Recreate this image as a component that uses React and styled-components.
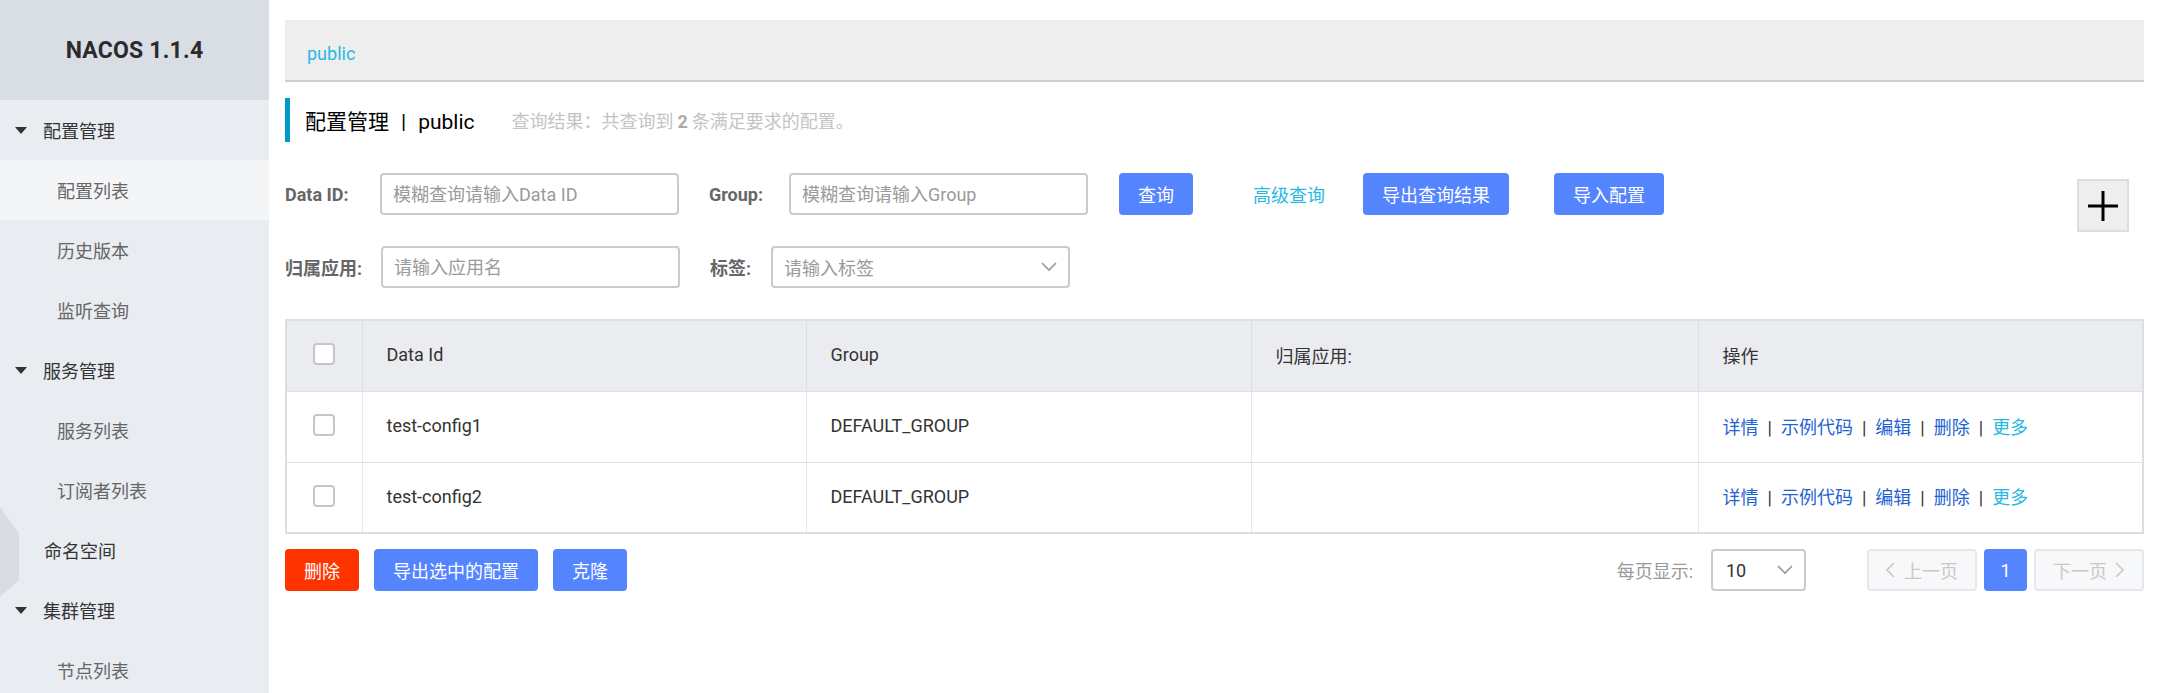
import React from 'react';
import styled, { createGlobalStyle, css } from 'styled-components';

const GlobalStyle = createGlobalStyle`
  html, body {
    margin:0;
    padding:0;
    background:#fff;
  }
  body {
    font-family: Roboto, "Noto Sans CJK SC", sans-serif;
    font-size:18px;
    color:#333;
  }
  * { box-sizing:border-box; }
`

const Page = styled.div`
  display:flex;
  height:693px;
  overflow:hidden;
`

/* ---------- sidebar ---------- */

const Sidebar = styled.aside`
  position:relative;
  width:269px;
  flex:none;
  background:#e9ecf1;
`

const Brand = styled.div`
  height:100px;
  display:flex;
  align-items:center;
  justify-content:center;
  background:#d9dde4;
  font-size:23px;
  font-weight:bold;
  color:#2b2b2b;
  letter-spacing:.2px;
`

const MenuItem = styled.div`
  height:60px;
  display:flex;
  align-items:center;
  color:#333;
  padding-left:${p => p.$level === 'sub' ? '57px' : p.$level === 'group' ? '15px' : '44px'};
  ${p => p.$level === 'sub' && css`color:#666;`}
  ${p => p.$active && css`background:#f4f5f7;`}
`

const Caret = styled.span`
  width:0;
  height:0;
  border-left:6.5px solid transparent;
  border-right:6.5px solid transparent;
  border-top:7px solid #333;
  margin-right:16px;
`

const CollapseTab = styled.div`
  position:absolute;
  left:0;
  top:507px;
  width:19px;
  height:90px;
  background:#d9dce2;
  clip-path:polygon(0 0, 100% 29%, 100% 81%, 0 100%);
`

/* ---------- main ---------- */

const Main = styled.main`
  flex:1;
  min-width:0;
  padding:20px 15px 0 16px;
`

const Crumb = styled.div`
  height:62px;
  background:#eeeeee;
  border-bottom:2px solid #cfcfcf;
  display:flex;
  align-items:center;
  padding:6px 0 0 22px;
  color:#27b8e3;
`

const TitleBar = styled.div`
  margin-top:16px;
  height:44px;
  display:flex;
  align-items:center;
  border-left:5px solid #0099cc;
  padding-left:15px;
`

const Title = styled.span`
  font-size:21px;
  color:#000;
`

const TitleSep = styled.span`
  margin:0 12px;
`

const Summary = styled.span`
  margin-left:37px;
  color:#c4c4c4;
  strong { color:#aaa; margin:0 4px; }
`

const FormArea = styled.div`
  display:flex;
  margin-top:31px;
`

const FormRows = styled.div`
  display:flex;
  flex-direction:column;
  gap:31px;
`

const FormRow = styled.div`
  display:flex;
  align-items:center;
`

const Label = styled.label`
  width:${p => p.$w}px;
  flex:none;
  font-weight:bold;
  color:#666;
  ${p => p.$gap && css`margin-left:30px;`}
`

const TextInput = styled.input`
  width:299px;
  height:42px;
  border:2px solid #c9cbd2;
  border-radius:4px;
  padding:0 11px;
  font:inherit;
  color:#333;
  outline:none;
  &::placeholder { color:#9a9a9a; }
`

const SelectBox = styled.div`
  width:${p => p.$w}px;
  height:42px;
  border:2px solid #c9cbd2;
  border-radius:4px;
  display:flex;
  align-items:center;
  justify-content:space-between;
  padding:0 11px 0 ${p => p.$pl || 11}px;
  color:${p => p.$placeholder ? '#9a9a9a' : '#333'};
  background:#fff;
`

const Button = styled.button`
  height:42px;
  padding:0 19px;
  border:none;
  border-radius:4px;
  font:inherit;
  color:#fff;
  background:${p => p.$danger ? '#ff3300' : '#5584ff'};
  cursor:pointer;
  flex:none;
`

const LinkText = styled.span`
  color:#27b8e3;
  cursor:pointer;
`

const AdvancedLink = styled(LinkText)`
  margin:0 38px 0 60px;
`

const AddButton = styled.div`
  margin:6px 15px 0 auto;
  width:52px;
  height:53px;
  background:#eeeeee;
  border:2px solid #dddddd;
  display:flex;
  align-items:center;
  justify-content:center;
`

/* ---------- table ---------- */

const Table = styled.table`
  margin-top:31px;
  width:100%;
  border-collapse:collapse;
  table-layout:fixed;
  border:2px solid #dcdee3;
`

const Th = styled.th`
  height:71px;
  background:#ebecf0;
  text-align:left;
  font-weight:normal;
  color:#333;
  padding:0 24px 2px;
  border-right:1px solid #dcdee3;
  border-bottom:1px solid #dcdee3;
  ${p => p.$check && css`padding:0 0 4px; text-align:center;`}
`

const Td = styled.td`
  height:71px;
  padding:0 24px 2px;
  color:#333;
  border-right:1px solid #e6e7eb;
  border-bottom:1px solid #dcdee3;
  ${p => p.$check && css`padding:0 0 4px; text-align:center;`}
`

const Checkbox = styled.span`
  display:inline-block;
  vertical-align:middle;
  width:22px;
  height:22px;
  border:2px solid #c4c6cf;
  border-radius:4px;
  background:#fff;
`

const ActionLink = styled.a`
  color:${p => p.$more ? '#27b8e3' : '#1f63d3'};
  text-decoration:none;
  cursor:pointer;
`

const ActionSep = styled.span`
  margin:0 9px;
  color:#333;
`

/* ---------- footer ---------- */

const Footer = styled.div`
  margin-top:15px;
  display:flex;
  align-items:center;
  justify-content:space-between;
`

const ButtonGroup = styled.div`
  display:flex;
  gap:15px;
`

const Pager = styled.div`
  display:flex;
  align-items:center;
`

const PageSizeLabel = styled.span`
  color:#999;
  margin-right:18px;
`

const PageNav = styled.div`
  display:flex;
  gap:7px;
  margin-left:61px;
`

const PageButton = styled.div`
  height:42px;
  width:${p => p.$w}px;
  border-radius:4px;
  display:flex;
  align-items:center;
  justify-content:center;
  gap:8px;
  ${p => p.$current ? css`
    background:#5584ff;
    color:#fff;
  ` : css`
    background:#f7f8fa;
    border:2px solid #e6e7eb;
    color:#c8c8c8;
  `}
`

const Chevron = ({ dir = 'down', color = '#999' }) => {
  const pts = {
    down: '1,1 8,8 15,1',
    left: '8,1 1,8 8,15',
    right: '1,1 8,8 1,15',
  }[dir];
  const w = dir === 'down' ? 16 : 10;
  const h = dir === 'down' ? 10 : 16;
  return (
    <svg width={w} height={h} viewBox={`0 0 ${w} ${h}`}>
      <polyline points={pts} fill="none" stroke={color} strokeWidth="1.6" />
    </svg>
  );
};

const rows = ['test-config1', 'test-config2'];
const actions = ['详情', '示例代码', '编辑', '删除'];

export default function App() {
  return (
    <Page>
      <GlobalStyle />
      <Sidebar>
        <Brand>NACOS 1.1.4</Brand>
        <MenuItem $level="group"><Caret />配置管理</MenuItem>
        <MenuItem $level="sub" $active>配置列表</MenuItem>
        <MenuItem $level="sub">历史版本</MenuItem>
        <MenuItem $level="sub">监听查询</MenuItem>
        <MenuItem $level="group"><Caret />服务管理</MenuItem>
        <MenuItem $level="sub">服务列表</MenuItem>
        <MenuItem $level="sub">订阅者列表</MenuItem>
        <MenuItem>命名空间</MenuItem>
        <MenuItem $level="group"><Caret />集群管理</MenuItem>
        <MenuItem $level="sub">节点列表</MenuItem>
        <CollapseTab />
      </Sidebar>

      <Main>
        <Crumb>public</Crumb>

        <TitleBar>
          <Title>配置管理<TitleSep>|</TitleSep>public</Title>
          <Summary>查询结果：共查询到<strong>2</strong>条满足要求的配置。</Summary>
        </TitleBar>

        <FormArea>
          <FormRows>
            <FormRow>
              <Label $w={95}>Data ID:</Label>
              <TextInput placeholder="模糊查询请输入Data ID" />
              <Label $w={80} $gap>Group:</Label>
              <TextInput placeholder="模糊查询请输入Group" />
              <Button style={{ marginLeft: 31 }}>查询</Button>
              <AdvancedLink>高级查询</AdvancedLink>
              <Button>导出查询结果</Button>
              <Button style={{ marginLeft: 45 }}>导入配置</Button>
            </FormRow>
            <FormRow>
              <Label $w={96}>归属应用:</Label>
              <TextInput placeholder="请输入应用名" />
              <Label $w={61} $gap>标签:</Label>
              <SelectBox $w={299} $placeholder>
                <span>请输入标签</span>
                <Chevron />
              </SelectBox>
            </FormRow>
          </FormRows>
          <AddButton>
            <svg width="32" height="32" viewBox="0 0 32 32">
              <path d="M16 1V31M1 16H31" stroke="#000" strokeWidth="3" />
            </svg>
          </AddButton>
        </FormArea>

        <Table>
          <colgroup>
            <col style={{ width: 76 }} />
            <col style={{ width: 444 }} />
            <col style={{ width: 445 }} />
            <col style={{ width: 447 }} />
            <col />
          </colgroup>
          <thead>
            <tr>
              <Th $check><Checkbox /></Th>
              <Th>Data Id</Th>
              <Th>Group</Th>
              <Th>归属应用:</Th>
              <Th>操作</Th>
            </tr>
          </thead>
          <tbody>
            {rows.map(id => (
              <tr key={id}>
                <Td $check><Checkbox /></Td>
                <Td>{id}</Td>
                <Td>DEFAULT_GROUP</Td>
                <Td />
                <Td>
                  {actions.map(a => (
                    <React.Fragment key={a}>
                      <ActionLink>{a}</ActionLink>
                      <ActionSep>|</ActionSep>
                    </React.Fragment>
                  ))}
                  <ActionLink $more>更多</ActionLink>
                </Td>
              </tr>
            ))}
          </tbody>
        </Table>

        <Footer>
          <ButtonGroup>
            <Button $danger>删除</Button>
            <Button>导出选中的配置</Button>
            <Button>克隆</Button>
          </ButtonGroup>
          <Pager>
            <PageSizeLabel>每页显示:</PageSizeLabel>
            <SelectBox $w={95} $pl={13}>
              <span>10</span>
              <Chevron />
            </SelectBox>
            <PageNav>
              <PageButton $w={110}><Chevron dir="left" color="#c8c8c8" />上一页</PageButton>
              <PageButton $w={43} $current>1</PageButton>
              <PageButton $w={110}>下一页<Chevron dir="right" color="#c8c8c8" /></PageButton>
            </PageNav>
          </Pager>
        </Footer>
      </Main>
    </Page>
  );
}
